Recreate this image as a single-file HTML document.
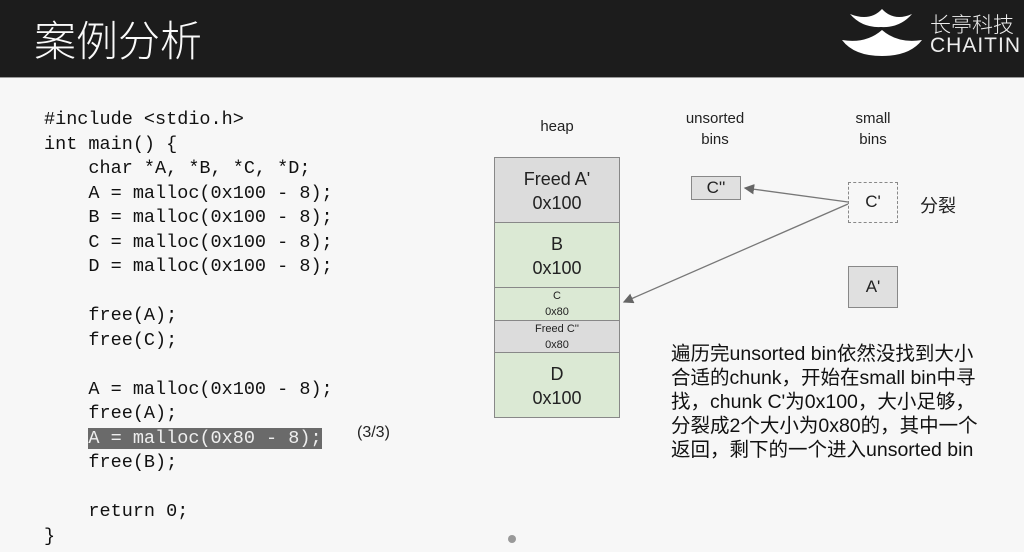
<!DOCTYPE html>
<html><head><meta charset="utf-8"><style>
body{margin:0;width:1024px;height:552px;background:#f7f7f7;position:relative;overflow:hidden;font-family:"Liberation Sans","Noto Sans CJK SC",sans-serif;color:#222}
.hdr{position:absolute;left:0;top:0;width:1024px;height:77px;background:#1c1c1c;border-bottom:1px solid #999}
.title{position:absolute;left:34px;top:8px;font-size:42px;color:#fafafa;font-family:"Noto Sans CJK SC",sans-serif;font-weight:300}
.code{position:absolute;left:44px;top:108px;font-family:"Liberation Mono",monospace;font-size:18.5px;line-height:24.5px;white-space:pre;color:#111}
.hl{background:#6a6a6a;color:#eee}
.a{position:absolute;text-align:center}
.box{position:absolute;left:494px;width:126px;border:1px solid #888;box-sizing:border-box;text-align:center;font-size:18px;line-height:24px}
.g{background:#dcdcdc}.gr{background:#dbe9d4}
</style></head><body>
<div class="hdr"><div class="title">案例分析</div>
<svg style="position:absolute;left:0;top:0" width="1024" height="77">
<path d="M850 14 Q870 22 882 9 Q894 22 912 14 Q900 28 881 27 Q862 28 850 14Z" fill="#fff"/>
<path d="M842 40 Q866 44 882 30 Q898 44 922 40 Q910 56 882 56 Q854 56 842 40Z" fill="#fff"/></svg>
<div style="position:absolute;left:930px;top:9px;color:#eee;font-size:21px;font-family:'Noto Sans CJK SC',sans-serif;font-weight:300">长亭科技</div>
<div style="position:absolute;left:930px;top:34px;color:#eee;font-size:21px;letter-spacing:1px;font-weight:300">CHAITIN</div>
</div>
<div class="code">#include &lt;stdio.h&gt;
int main() {
    char *A, *B, *C, *D;
    A = malloc(0x100 - 8);
    B = malloc(0x100 - 8);
    C = malloc(0x100 - 8);
    D = malloc(0x100 - 8);

    free(A);
    free(C);

    A = malloc(0x100 - 8);
    free(A);
    <span class="hl">A = malloc(0x80 - 8);</span>
    free(B);

    return 0;
}</div>
<div class="a" style="left:357px;top:424px;font-size:16px">(3/3)</div>
<div class="a" style="left:520px;top:118px;width:74px;font-size:15px">heap</div>
<div class="a" style="left:670px;top:108px;width:90px;font-size:15px;line-height:21px">unsorted<br>bins</div>
<div class="a" style="left:838px;top:108px;width:70px;font-size:15px;line-height:21px">small<br>bins</div>
<div class="box g" style="top:157px;height:66px;padding-top:9px">Freed A'<br>0x100</div>
<div class="box gr" style="top:222px;height:66px;padding-top:9px">B<br>0x100</div>
<div class="box gr" style="top:287px;height:34px;font-size:11px;line-height:16px">C<br>0x80</div>
<div class="box g" style="top:320px;height:33px;font-size:11px;line-height:16px">Freed C''<br>0x80</div>
<div class="box gr" style="top:352px;height:66px;padding-top:9px">D<br>0x100</div>
<div style="position:absolute;left:691px;top:176px;width:50px;height:24px;border:1px solid #888;background:#e0e0e0;box-sizing:border-box;text-align:center;font-size:17px;line-height:22px">C''</div>
<div style="position:absolute;left:848px;top:182px;width:50px;height:41px;border:1.5px dashed #888;box-sizing:border-box;text-align:center;font-size:17px;line-height:38px">C'</div>
<div class="a" style="left:920px;top:192px;font-size:18px">分裂</div>
<div style="position:absolute;left:848px;top:266px;width:50px;height:42px;border:1px solid #888;background:#e0e0e0;box-sizing:border-box;text-align:center;font-size:17px;line-height:40px">A'</div>
<svg style="position:absolute;left:0;top:0" width="1024" height="552">
<defs><marker id="m" markerWidth="8" markerHeight="8" refX="7" refY="4" orient="auto"><path d="M0 0L8 4L0 8Z" fill="#666"/></marker></defs>
<line x1="848" y1="202" x2="745" y2="188" stroke="#777" stroke-width="1.3" marker-end="url(#m)"/>
<line x1="848" y1="204" x2="624" y2="302" stroke="#777" stroke-width="1.3" marker-end="url(#m)"/>
</svg>
<div style="position:absolute;left:671px;top:342px;width:360px;font-size:19.5px;line-height:24px;color:#111;white-space:nowrap">遍历完unsorted bin依然没找到大小<br>合适的chunk，开始在small bin中寻<br>找，chunk C'为0x100，大小足够，<br>分裂成2个大小为0x80的，其中一个<br>返回，剩下的一个进入unsorted bin</div>
<div style="position:absolute;left:508px;top:535px;width:8px;height:8px;border-radius:50%;background:#999"></div>
</body></html>
